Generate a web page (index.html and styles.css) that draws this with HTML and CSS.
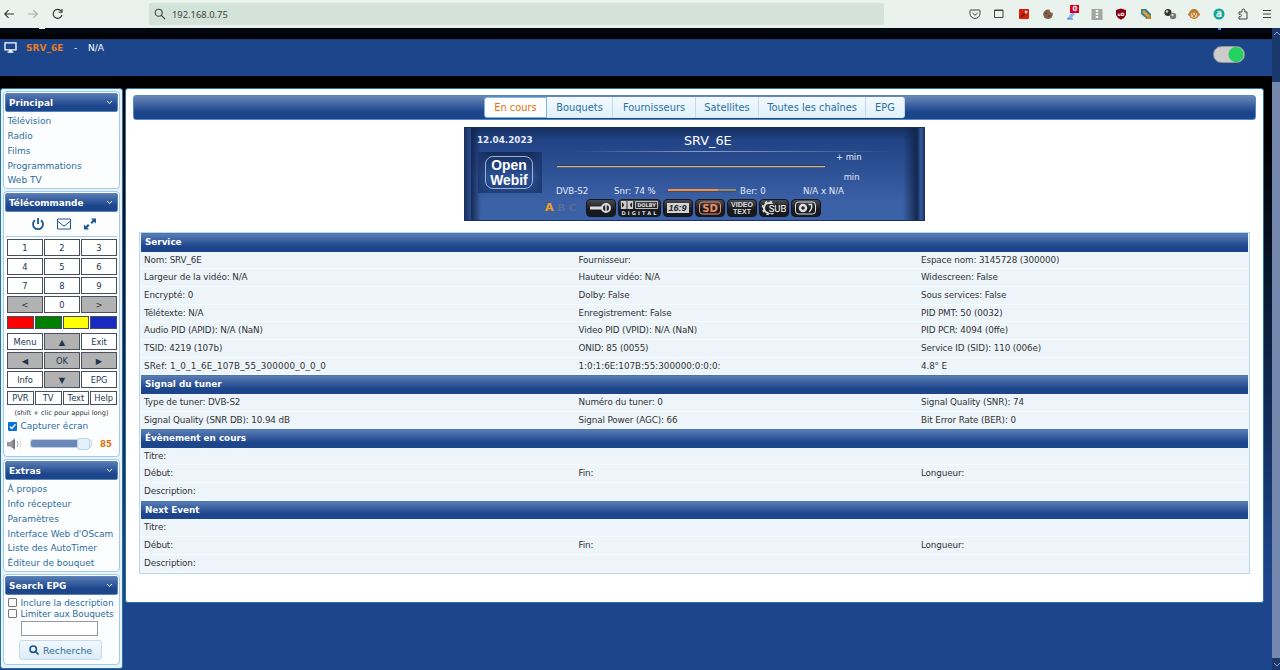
FILE: index.html
```html
<!DOCTYPE html>
<html lang="fr">
<head>
  <meta charset="UTF-8">
  <title>Open Webif</title>
  <link rel="stylesheet" href="styles.css">
</head>
<body>

  <!-- barre du navigateur -->
  <div class="browser">
    <svg class="nav" width="66" height="16" viewBox="0 0 66 16" fill="none" stroke="#333" stroke-width="1.1">
      <path d="M10 8H1M4.500 4.200L.7 8L4.500 11.800"/>
      <path stroke="#a5aca8" d="M24 8H33M29.500 4.200L33.300 8L29.500 11.800"/>
      <path d="M57.300 5.200A4.500 4.500 0 1 0 58 9M58 3V6.300H54.700"/>
    </svg>
    <div class="url">
      <svg width="12" height="12" viewBox="0 0 12 12" fill="none" stroke="#444" stroke-width="1.1"><circle cx="4.700" cy="4.700" r="3.500"/><path d="M7.300 7.300L11 11"/></svg>
      <span>192.168.0.75</span>
    </div>
    <div class="ext">
      <svg viewBox="0 0 14 14" fill="none" stroke="#444"><path d="M2.500 3H11.500Q12 3 12 4V6.500A5 5 0 0 1 2 6.500V4Q2 3 2.500 3ZM4.500 6L7 8.300L9.500 6"/></svg>
      <svg viewBox="0 0 14 14" fill="none" stroke="#444"><path d="M2.500 3H11V10.500H2.500ZM2.500 3.500H11"/></svg>
      <svg viewBox="0 0 14 14"><rect x="2" y="2" width="10" height="10" rx="1" fill="#d81e10"/><path d="M4 10L9 5" stroke="#8b1509" stroke-width="2"/><circle cx="9" cy="5" r="1.500" fill="#ffd7a0"/></svg>
      <svg viewBox="0 0 14 14"><circle cx="7" cy="7.300" r="4.800" fill="#80604a"/><circle cx="11" cy="3.500" r="2.200" fill="#e9f2ec"/><circle cx="5" cy="6" r="1" fill="#5d4536"/><circle cx="8" cy="9" r="1" fill="#5d4536"/></svg>
      <span class="ext-badge"><svg viewBox="0 0 14 14"><path d="M2 12L7 5L10 7L6 12Z" fill="#8fb4ec"/><path d="M2 12H8" stroke="#4a79c8"/></svg><b>0</b></span>
      <svg viewBox="0 0 14 14"><rect x="1.500" y="2" width="11" height="11" fill="#a3a5a4"/><path d="M7 3V12" stroke="#f4f4f4" stroke-width="2.500" stroke-dasharray="2 1"/></svg>
      <svg viewBox="0 0 14 14"><path d="M7 1.500L12 3V8Q11 11 7 12.800Q3 11 2 8V3Z" fill="#850010"/><text x="7" y="8.500" class="ub">uD</text></svg>
      <svg viewBox="0 0 14 14"><path d="M2 2H7L12 7V12H8L2 7Z" fill="#367f91"/><path d="M4 4L11 11" stroke="#e8a12c" stroke-width="2.600"/><path d="M6 12H12V8" fill="#c67d22"/></svg>
      <svg viewBox="0 0 14 14"><circle cx="5" cy="5.500" r="3.500" fill="#333"/><circle cx="10" cy="9" r="3.200" fill="#777"/><circle cx="4" cy="4.500" r="1.300" fill="#ccc"/><circle cx="9.500" cy="8" r="1.200" fill="#ddd"/></svg>
      <svg viewBox="0 0 14 14"><circle cx="7" cy="7" r="5" fill="#bd7b31"/><circle cx="2.300" cy="7.500" r="1.300" fill="#bd7b31"/><circle cx="11.700" cy="7.500" r="1.300" fill="#bd7b31"/><ellipse cx="7" cy="8" rx="3.300" ry="2.600" fill="#f6c98b"/><path d="M5.500 6.500V7.500M8.500 6.500V7.500M6 9H8" stroke="#3c230c" stroke-width=".8"/></svg>
      <svg viewBox="0 0 14 14"><circle cx="7" cy="7" r="5.500" fill="#12a59a"/><text x="7" y="10.300" class="amz">a</text></svg>
      <svg viewBox="0 0 14 14" fill="none" stroke="#444"><path d="M3 5H6V3.500A1.400 1.400 0 0 1 8.800 3.500V5H11V12H3V9.700H4.500A1.300 1.300 0 0 0 4.500 7.200H3Z"/></svg>
      <svg viewBox="0 0 14 14" fill="none" stroke="#444"><path d="M3 3.500H11M3 7H11M3 10.500H11"/></svg>
    </div>
  </div>

  <div class="page">
    <div class="site">
      <div class="topline"><i></i><i></i></div>
      <div class="header">
        <svg width="13" height="12" viewBox="0 0 13 12"><path d="M1 .8H12V7.800H1Z" fill="none" stroke="#fff" stroke-width="1.300"/><path d="M5 8H8V9.500H9.500V10.800H3.500V9.500H5Z" fill="#fff"/></svg>
        <span class="channel">SRV_6E</span>
        <span class="dash">-</span>
        <span>N/A</span>
        <span class="switch"></span>
      </div>

      <div class="wrapper">
        <div class="leftmenu">
          <div class="panel principal">
            <h3>Principal<svg class="chev" viewBox="0 0 7 5"><path d="M1 1L3.500 3.500L6 1"/></svg></h3>
            <a>Télévision</a>
            <a>Radio</a>
            <a>Films</a>
            <a>Programmations</a>
            <a>Web TV</a>
          </div>

          <div class="panel remote">
            <h3>Télécommande<svg class="chev" viewBox="0 0 7 5"><path d="M1 1L3.500 3.500L6 1"/></svg></h3>
            <div class="tools">
              <svg width="14" height="14" viewBox="0 0 14 14" fill="none" stroke="#1c568f" stroke-width="1.800"><path d="M4 3.200A5 5 0 1 0 10 3.200M7 1V7"/></svg>
              <svg width="14" height="14" viewBox="0 0 14 14" fill="none" stroke="#1c568f"><path d="M.5 2H13.500V12H.5ZM.5 4L6 8.500Q7 9.200 8 8.500L13.500 4"/></svg>
              <svg width="14" height="14" viewBox="0 0 14 14" fill="#1c568f"><path d="M8 1.500H13V6.500L11.200 4.800L9 7L7.500 5.500L9.700 3.300ZM6 12.500H1V7.500L2.700 9.200L5 7L6.500 8.500L4.300 10.800Z"/></svg>
            </div>
            <div class="keys three">
              <b>1</b><b>2</b><b>3</b>
              <b>4</b><b>5</b><b>6</b>
              <b>7</b><b>8</b><b>9</b>
              <b class="grey">&lt;</b><b>0</b><b class="grey">&gt;</b>
            </div>
            <div class="keys four colors">
              <b class="red"></b><b class="green"></b><b class="yellow"></b><b class="blue"></b>
            </div>
            <div class="keys three">
              <b>Menu</b><b class="grey">▲</b><b>Exit</b>
              <b class="grey">◀</b><b class="grey">OK</b><b class="grey">▶</b>
              <b>Info</b><b class="grey">▼</b><b>EPG</b>
            </div>
            <div class="keys four last">
              <b>PVR</b><b>TV</b><b>Text</b><b>Help</b>
            </div>
            <p class="hint">(shift + clic pour appui long)</p>
            <label class="grab"><span class="check on"><svg viewBox="0 0 9 9"><path d="M1.800 4.500L3.800 6.500L7.500 2.300"/></svg></span>Capturer écran</label>
            <div class="volume">
              <svg width="17" height="14" viewBox="0 0 17 14"><path d="M1 5H4L9 1V13L4 9.500H1Z" fill="#999"/><path d="M8 3V11" stroke="#555"/><path d="M11 4Q13 7 11 10" fill="none" stroke="#aaa"/><path d="M13.500 2.500Q16.500 7 13.500 11.500" fill="none" stroke="#ddd"/></svg>
              <span class="slider"><i></i></span>
              <strong>85</strong>
            </div>
          </div>

          <div class="panel extras">
            <h3>Extras<svg class="chev" viewBox="0 0 7 5"><path d="M1 1L3.500 3.500L6 1"/></svg></h3>
            <a>À propos</a>
            <a>Info récepteur</a>
            <a>Paramètres</a>
            <a>Interface Web d'OScam</a>
            <a>Liste des AutoTimer</a>
            <a>Éditeur de bouquet</a>
          </div>

          <div class="panel search">
            <h3>Search EPG<svg class="chev" viewBox="0 0 7 5"><path d="M1 1L3.500 3.500L6 1"/></svg></h3>
            <label><span class="check"></span>Inclure la description</label>
            <label><span class="check"></span>Limiter aux Bouquets</label>
            <div class="field"></div>
            <div class="button"><svg width="10" height="10" viewBox="0 0 10 10" fill="none" stroke="#1c568f" stroke-width="1.600"><circle cx="4.200" cy="4.200" r="3.200"/><path d="M6.500 6.500L9.500 9.500"/></svg>Recherche</div>
          </div>
        </div>

        <div class="content">
          <div class="tabs">
            <span class="active w1">En cours</span>
            <span class="w2">Bouquets</span>
            <span class="w3">Fournisseurs</span>
            <span class="w4">Satellites</span>
            <span class="w5">Toutes les chaînes</span>
            <span class="w6">EPG</span>
          </div>

          <div class="lcd">
            <div class="lcd-top"><b>12.04.2023</b><span>SRV_6E</span></div>
            <div class="lcd-mid">
              <div class="logo"><span>Open<br>Webif</span></div>
              <div class="lcd-info">
                <div class="lcd-times">
                  <i class="progress"></i>
                  <div><span>+ min</span><span>min</span></div>
                </div>
                <div class="lcd-signal">
                  <span class="s1">DVB-S2</span><span class="s2">Snr: 74 %</span><i class="snr"></i><span class="s3">Ber: 0</span><span>N/A x N/A</span>
                </div>
              </div>
            </div>
            <div class="lcd-icons">
              <span class="abc"><em>A</em><span>B</span><span>C</span></span>
              <span class="ico"><svg width="24" height="14" viewBox="0 0 24 14" fill="none" stroke="#ddd"><path d="M1 7H13" stroke-width="3"/><circle cx="17" cy="7" r="4" stroke-width="2"/><path d="M17 4V10" stroke-width="1.500"/></svg></span>
              <span class="ico wide"><svg width="39" height="16" viewBox="0 0 39 16"><path d="M1 1H6.500V9H1ZM7.500 1H13V9H7.500Z" fill="#ccc"/><path d="M2 2.500Q6 5 2 7.500M12 2.500Q8 5 12 7.500" fill="#222"/><path d="M15.500 1.500H37.500V8.500H15.500Z" fill="none" stroke="#bbb"/><text x="26.500" y="7" class="t-dolby">DOLBY</text><text x="1.500" y="15" textLength="35" class="t-digital">DIGITAL</text></svg></span>
              <span class="ico"><svg width="24" height="12" viewBox="0 0 24 12"><rect x="1" y="1" width="22" height="10" fill="#d4d4d4"/><text x="11.500" y="9.300" class="t-169">16:9</text></svg></span>
              <span class="ico"><svg width="24" height="14" viewBox="0 0 24 14"><rect x="1.500" y="1" width="21" height="12" rx="3" fill="none" stroke="#f09060"/><text x="12" y="10.600" class="t-sd">SD</text></svg></span>
              <span class="ico videotext"><span>VIDEO</span><span>TEXT</span></span>
              <span class="ico"><svg width="27" height="16" viewBox="0 0 27 16"><circle cx="8" cy="8" r="5" fill="none" stroke="#ddd" stroke-width="2.200"/><circle cx="8" cy="8" r="6.500" fill="none" stroke="#ddd" stroke-width="1.500" stroke-dasharray="2.500 2.600"/><path d="M7.500 4H17V13H7.500Z" fill="#222"/><text x="16.500" y="12" class="t-sub">SUB</text></svg></span>
              <span class="ico"><svg width="24" height="14" viewBox="0 0 24 14" fill="none" stroke="#ddd"><rect x="1.500" y="1" width="20" height="12" rx="3"/><circle cx="9" cy="7" r="3" stroke-width="2.500"/><path d="M14.500 3.500H17.500Q18.500 8 15 11" stroke-width="1.400"/></svg></span>
            </div>
          </div>

          <div class="infos">
            <h4>Service</h4>
            <div class="row"><span>Nom: SRV_6E</span><span>Fournisseur:</span><span>Espace nom: 3145728 (300000)</span></div>
            <div class="row"><span>Largeur de la vidéo: N/A</span><span>Hauteur vidéo: N/A</span><span>Widescreen: False</span></div>
            <div class="row"><span>Encrypté: 0</span><span>Dolby: False</span><span>Sous services: False</span></div>
            <div class="row"><span>Télétexte: N/A</span><span>Enregistrement: False</span><span>PID PMT: 50 (0032)</span></div>
            <div class="row"><span>Audio PID (APID): N/A (NaN)</span><span>Video PID (VPID): N/A (NaN)</span><span>PID PCR: 4094 (0ffe)</span></div>
            <div class="row"><span>TSID: 4219 (107b)</span><span>ONID: 85 (0055)</span><span>Service ID (SID): 110 (006e)</span></div>
            <div class="row"><span class="sref">SRef: 1_0_1_6E_107B_55_300000_0_0_0</span><span class="ref">1:0:1:6E:107B:55:300000:0:0:0:</span><span>4.8° E</span></div>
            <h4>Signal du tuner</h4>
            <div class="row"><span>Type de tuner: DVB-S2</span><span>Numéro du tuner: 0</span><span>Signal Quality (SNR): 74</span></div>
            <div class="row"><span>Signal Quality (SNR DB): 10.94 dB</span><span>Signal Power (AGC): 66</span><span>Bit Error Rate (BER): 0</span></div>
            <h4>Évènement en cours</h4>
            <div class="row"><span>Titre:</span></div>
            <div class="row"><span>Début:</span><span>Fin:</span><span>Longueur:</span></div>
            <div class="row"><span>Description:</span></div>
            <h4>Next Event</h4>
            <div class="row"><span>Titre:</span></div>
            <div class="row"><span>Début:</span><span>Fin:</span><span>Longueur:</span></div>
            <div class="row"><span>Description:</span></div>
          </div>
        </div>
      </div>
    </div>

    <div class="scrollbar">
      <svg width="8" height="8" viewBox="0 0 8 8" fill="none" stroke="#8ea4cc"><path d="M2 7L5 4L8 7"/></svg>
      <div class="thumb"></div>
      <svg width="8" height="8" viewBox="0 0 8 8" fill="none" stroke="#8ea4cc"><path d="M2 2L5 5L8 2"/></svg>
    </div>
  </div>

</body>
</html>
```
FILE: styles.css
```css
* {
  box-sizing: border-box;
  margin: 0;
  padding: 0;
}

body {
  width: 1280px;
  height: 670px;
  overflow: hidden;
  font-family: "DejaVu Sans", Verdana, sans-serif;
  font-size: 9px;
  color: #333;
  background: #1c458c;
}

svg {
  display: block;
  flex: none;
}

/* NAVIGATEUR */
.browser {
  display: flex;
  align-items: center;
  height: 28px;
  background: #e9f2ec;
}

.nav {
  margin-left: 4px;
}

.url {
  display: flex;
  align-items: center;
  gap: 6px;
  width: 735px;
  height: 22px;
  margin-left: 79px;
  padding-left: 5px;
  border-radius: 2px;
  background: #d3e3d9;
  font: 9.400px "Noto Sans", sans-serif;
  color: #3b4540;
}

.ext {
  display: flex;
  gap: 10.360px;
  margin-left: 84px;
}

.ext svg {
  width: 14px;
  height: 14px;
}

.ext-badge {
  position: relative;
}

.ext-badge b {
  position: absolute;
  left: 5px;
  top: -2px;
  width: 9px;
  height: 8px;
  background: #d70022;
  color: #fff;
  font-size: 7px;
  line-height: 8px;
  text-align: center;
}

.ub {
  font: bold 4.5px "DejaVu Sans", sans-serif;
  fill: #fff;
  text-anchor: middle;
}

.amz {
  font: bold 10px "Open Sans", sans-serif;
  fill: #fff;
  text-anchor: middle;
}

/* PAGE */
.page {
  display: flex;
  height: 642px;
}

.site {
  width: 1272px;
}

.topline {
  display: flex;
  justify-content: space-between;
  height: 11px;
  padding: 0 51px 0 39px;
  background: linear-gradient(#040a14, #000);
}

.topline i {
  width: 6px;
  height: 1px;
  background: #fff;
}

.topline i + i {
  width: 3px;
  height: 2px;
  background: #4a86e8;
}

.header {
  display: flex;
  height: 37px;
  padding: 2px 27px 0 4px;
  background: #1c458c;
  border-top: 1px solid #1c3f7c;
  color: #fff;
  line-height: 12px;
}

.channel {
  margin-left: 9px;
  width: 48px;
  color: #e57c26;
  font-weight: bold;
}

.dash {
  width: 14px;
}

.switch {
  width: 32px;
  height: 17px;
  margin: 4px 0 0 auto;
  border: 1px solid #98979a;
  border-radius: 9px;
  background: radial-gradient(circle at 22px 7.500px, #23d160 7px, #ccc 8px);
}

.wrapper {
  display: flex;
  align-items: flex-start;
  gap: 2px;
  height: 594px;
  padding-top: 12px;
  background: linear-gradient(#000 0, #000 60px, #1c458c 500px);
}

.leftmenu {
  width: 123px;
  height: 581px;
  padding: 2px;
  border: 1px solid #2a719f;
  border-radius: 3px;
  background: #e4f3fc;
}

.panel {
  width: 117px;
  margin-bottom: 2px;
  padding: 1px 1px 0;
  border: 1px solid #a6cbe2;
  border-radius: 4px;
  background: #fcfdfe;
  color: #2e6e9e;
}

.principal { height: 98px; }
.remote { height: 266px; }
.extras { height: 113px; }
.search { height: 91px; }

.panel h3 {
  display: flex;
  align-items: center;
  justify-content: space-between;
  height: 19px;
  margin-bottom: 2px;
  padding: 0 4px 0 3px;
  border: 1px solid #5a83b8;
  border-radius: 2px;
  background: linear-gradient(#567ab3, #1c458c 70%);
  color: #fff;
  font-size: 8.900px;
}

.chev {
  width: 7px;
  height: 5px;
  fill: none;
  stroke: #fff;
}

.panel a {
  display: block;
  padding-left: 2.500px;
  font-size: 9px;
  line-height: 14.850px;
  white-space: nowrap;
}

/* TÉLÉCOMMANDE */
.tools {
  display: flex;
  justify-content: center;
  gap: 12px;
  height: 23px;
  margin: 0 1px 2px;
  padding: 3px 0 0 4px;
  border-bottom: 1px solid #a6cbe2;
}

.keys {
  display: grid;
  gap: 2px 1px;
  margin: 0 0 3px 2px;
  width: 110px;
}

.three {
  grid-template-columns: repeat(3, 1fr);
  grid-auto-rows: 17px;
}

.four {
  grid-template-columns: repeat(4, 1fr);
  grid-auto-rows: 14px;
}

.colors {
  grid-auto-rows: 13px;
  margin-bottom: 4px;
}

.keys b {
  display: flex;
  align-items: center;
  justify-content: center;
  border: 1px solid #49505c;
  background: #fff;
  color: #22344d;
  font-size: 8.300px;
  font-weight: normal;
}

.keys .grey { background: #b2b2b2; }
.keys .red { background: #f00; }
.keys .green { background: #008000; }
.keys .yellow { background: #ff0; }
.keys .blue { background: #172bc0; }

.last {
  margin-bottom: 3px;
}

.hint {
  color: #333;
  font-size: 6.600px;
  line-height: 11px;
  text-align: center;
}

.check {
  flex: none;
  width: 9px;
  height: 9px;
  margin-right: 4px;
  border: 1px solid #777;
  border-radius: 1px;
  background: #fff;
}

.check.on {
  border: 0;
  background: #0670d4;
}

.check path {
  fill: none;
  stroke: #fff;
  stroke-width: 1.300;
}

.grab,
.search label {
  display: flex;
  align-items: center;
  padding-left: 2.500px;
  white-space: nowrap;
}

.grab {
  height: 14px;
  font-size: 9px;
}

.volume {
  display: flex;
  align-items: center;
  height: 21px;
  padding-left: 1px;
}

.slider {
  display: flex;
  align-items: center;
  justify-content: flex-end;
  width: 62px;
  height: 9px;
  margin-left: 7px;
  border-radius: 3px;
  border: 1px solid #b8d5e8;
  background: linear-gradient(90deg, #6d88b8 50px, #fff 50px);
}

.slider i {
  width: 13px;
  height: 12px;
  margin-right: 1px;
  border: 1px solid #b8d5e8;
  border-radius: 3px;
  background: #e4f1fb;
}

.volume strong {
  margin-left: 8px;
  color: #e17009;
  font-size: 8.600px;
}

/* RECHERCHE EPG */
.search label {
  height: 11px;
  font-size: 8.900px;
}

.search label + label {
  letter-spacing: -0.100px;
}

.field {
  width: 77px;
  height: 15px;
  margin: 2px 0 0 16px;
  border: 1px solid #999;
  background: #fff;
}

.button {
  display: flex;
  align-items: center;
  justify-content: center;
  gap: 4px;
  width: 83px;
  height: 20px;
  margin: 4px 0 0 14px;
  border: 1px solid #c5dbec;
  border-radius: 3px;
  background: linear-gradient(#f2f8fd, #dcecf8);
  font-size: 9.400px;
}

/* CONTENU */
.content {
  width: 1139px;
  height: 515px;
  padding: 6px 7px;
  border: 1px solid #2a719f;
  border-radius: 3px;
  background: #fff;
}

.tabs {
  display: flex;
  justify-content: center;
  height: 25px;
  padding: 1px;
  border: 1px solid #5488c0;
  border-radius: 3px;
  background: linear-gradient(#6a87b7, #1c458c 70%);
  color: #2e6e9e;
  font-size: 9.850px;
}

.tabs span {
  display: flex;
  align-items: center;
  justify-content: center;
  border-right: 1px solid #c5dbec;
  background: linear-gradient(#f2f9fe, #dff1fc);
  white-space: nowrap;
}

.tabs .active {
  border: 1px solid #79b7e7;
  border-radius: 3px 0 0 3px;
  background: #fff;
  color: #e17009;
}

.w1 { width: 63px; }
.w2 { width: 66px; }
.w3 { width: 83px; }
.w4 { width: 63px; }
.w5 { width: 107px; }
.tabs .w6 {
  width: 39px;
  border-radius: 0 3px 3px 0;
}

/* AFFICHEUR */
.lcd {
  width: 461px;
  height: 94px;
  margin: 7px auto 0 331px;
  border: 1px solid #17325f;
  background:
    linear-gradient(90deg, #1c3260 0, #2a4d92 6px, transparent 6px, transparent 452px, #1b3563 453px, #35599d 456px, #1c3260 460px),
    linear-gradient(90deg, #122449 5px, transparent 16px, transparent 438px, #122449 453px),
    linear-gradient(#16305f 0, #214385 12px, #3b60a6 80%, #3a61a7 100%);
  color: #e4eaf6;
}

.lcd-top {
  display: flex;
  align-items: center;
  height: 24px;
  padding-left: 12px;
  background: linear-gradient(90deg, transparent 110px, #8aa0c8 240px, transparent 430px) bottom / 100% 1px no-repeat;
}

.lcd-top b {
  width: 207px;
  font-size: 8.800px;
}

.lcd-top span {
  color: #fff;
  font-size: 12.800px;
}

.lcd-mid {
  display: flex;
  height: 45px;
  padding-left: 13px;
}

.logo {
  width: 64px;
  height: 41px;
  padding: 4px 9px 0 7px;
  background: linear-gradient(90deg, #1c3970, transparent 15% 85%, #1c3970), linear-gradient(#142c58, #2c5095 60%, #203e79);
}

.logo span {
  display: block;
  height: 33px;
  padding-top: 1px;
  border: 1px solid #9fb2d2;
  border-radius: 8px;
  color: #fff;
  font: bold 13.800px/15px "Liberation Sans", Arial, sans-serif;
  text-align: center;
}

.lcd-info {
  margin-left: 14px;
}

.lcd-times {
  display: flex;
  align-items: flex-start;
  height: 32px;
}

.progress {
  width: 268px;
  height: 3px;
  margin: 13px 11px 0 1px;
  border-top: 1px solid #333d52;
  border-bottom: 1px solid #59627a;
  background: #c9b894;
}

.lcd-times div {
  display: flex;
  flex-direction: column;
  gap: 10px;
  align-items: flex-end;
  line-height: 10px;
  font-size: 8.400px;
}

.lcd-times span + span {
  padding-right: 2px;
}

.lcd-signal {
  display: flex;
  align-items: center;
  height: 13px;
  font-size: 8.600px;
  white-space: nowrap;
}

.s1 { width: 58px; }
.s2 { width: 54px; }
.s3 { width: 63px; }

.snr {
  width: 68px;
  height: 3px;
  margin-right: 4px;
  border-bottom: 1px solid #4d4a58;
  background: linear-gradient(90deg, #f09050 50px, #8d8a84 50px);
}

.lcd-icons {
  display: flex;
  align-items: center;
  gap: 2px;
  height: 21px;
  padding-left: 80px;
}

.abc {
  display: flex;
  align-items: baseline;
  gap: 4px;
  width: 39px;
  color: #62718f;
  font: bold 11px "Liberation Serif", serif;
}

.abc em {
  color: #f9a01b;
  font: bold 11px "DejaVu Sans", sans-serif;
}

.ico {
  display: flex;
  align-items: center;
  justify-content: center;
  width: 30px;
  height: 18px;
  border: 1px solid #15181f;
  border-radius: 4px;
  background: linear-gradient(#4a4b50, #17191e 60%);
}

.wide {
  width: 43px;
}

.videotext {
  flex-direction: column;
  color: #ddd;
  font: bold 7px/7px "Liberation Sans", Arial, sans-serif;
}

.t-dolby, .t-digital {
  font: bold 5px "DejaVu Sans", sans-serif;
  fill: #ddd;
}

.t-dolby, .t-169, .t-sd, .t-sub {
  text-anchor: middle;
}

.t-169 {
  font: italic bold 9px "Liberation Sans", sans-serif;
  fill: #222;
}

.t-sd {
  font: bold 10px "DejaVu Sans", sans-serif;
  fill: #f09060;
}

.t-sub {
  font: 9.500px "Roboto", sans-serif;
  fill: #fff;
}

/* INFOS */
.infos {
  width: 1111px;
  height: 342px;
  margin: 11px 0 0 6px;
  padding: 0 1px;
  border: 1px solid #bcd9e5;
  background: #edf5fb;
}

.infos h4 {
  height: 18.500px;
  padding-left: 4px;
  border-top: 1px solid #4377b5;
  background: linear-gradient(#5a7cb4, #1c458c 70%);
  color: #fff;
  font-size: 8.800px;
  line-height: 17px;
}

.row {
  display: grid;
  grid-template-columns: 434.500px 342.500px 1fr;
  height: 17.700px;
  padding-left: 3px;
  border-bottom: 1px solid #f8fbfe;
  font-size: 8.800px;
  line-height: 17.500px;
  letter-spacing: -0.130px;
}

.sref {
  letter-spacing: 0.140px;
}

.ref {
  letter-spacing: 0;
}

/* ASCENSEUR */
.scrollbar {
  display: flex;
  flex-direction: column;
  width: 8px;
  background: #1b386d;
}

.thumb {
  height: 576px;
  margin: 46px 0 3px;
  background: #7488ae;
}
```
